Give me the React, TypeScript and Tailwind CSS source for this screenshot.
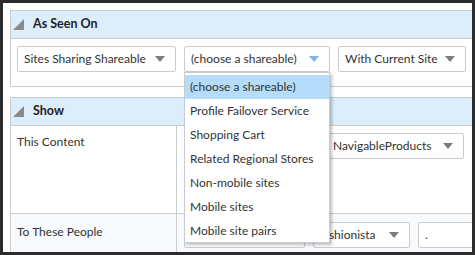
const Arrow = ({ color = "#7d7d7d" }: { color?: string }) => (
  <svg width="10" height="6" viewBox="0 0 10 6" className="shrink-0">
    <polygon points="0,0 10,0 5,6" fill={color} />
  </svg>
);

const Dropdown = ({
  label,
  width,
  arrowColor,
  textPad = "pl-[6px]",
}: {
  label: string;
  width: string;
  arrowColor?: string;
  textPad?: string;
}) => (
  <div
    className={`${width} ${textPad} h-[26px] shrink-0 border border-[#c8ccd0] rounded-[2px] bg-white flex items-center justify-between pr-[10px]`}
  >
    <span className="whitespace-nowrap">{label}</span>
    <Arrow color={arrowColor} />
  </div>
);

const Header = ({ title }: { title: string }) => (
  <div className="h-[28px] bg-[#dcedfc] border-b border-[#c9cdd2] flex items-center pl-[2px] gap-[9px]">
    <svg width="11" height="11" viewBox="0 0 11 11">
      <polygon points="11,0 11,11 0,11" fill="#8a8a8a" />
    </svg>
    <span className="font-bold text-[12.5px] text-[#1f1f1f]">{title}</span>
  </div>
);

const menuItems = [
  "(choose a shareable)",
  "Profile Failover Service",
  "Shopping Cart",
  "Related Regional Stores",
  "Non-mobile sites",
  "Mobile sites",
  "Mobile site pairs",
];

const App = () => {
  return (
    <div
      className="w-[475px] h-[255px] bg-[#2b2b2b] p-[3px] text-[12px] text-[#333]"
      style={{ fontFamily: "Lato, 'Open Sans', sans-serif" }}
    >
      <div className="relative h-full bg-white overflow-hidden pl-[7px] pt-[7px]">
        <div className="w-[475px]">
          {/* As Seen On */}
          <div className="border border-[#c9cdd2]">
            <Header title="As Seen On" />
            <div className="h-[47px] pt-[7px] pl-[6px] flex gap-[8px]">
              <Dropdown label="Sites Sharing Shareable" width="w-[159px]" />
              <Dropdown
                label="(choose a shareable)"
                width="w-[146px]"
                arrowColor="#7fb3e3"
              />
              <Dropdown label="With Current Site" width="w-[128px]" />
            </div>
          </div>

          {/* Show */}
          <div className="mt-[10px] border border-[#c9cdd2]">
            <Header title="Show" />
            <div className="flex h-[88px] border-b border-[#c9cdd2]">
              <div className="w-[166px] shrink-0 border-r border-[#c9cdd2] pl-[6px] pt-[7px]">
                This Content
              </div>
              <div className="pt-[7px] pl-[149px]">
                <Dropdown label="NavigableProducts" width="w-[138px]" />
              </div>
            </div>
            <div className="flex h-[60px] bg-[#f8fafd]">
              <div className="w-[166px] shrink-0 border-r border-[#c9cdd2] pl-[6px] pt-[9px]">
                To These People
              </div>
              <div className="pt-[8px] pl-[7px] flex gap-[8px]">
                <Dropdown label="" width="w-[121px]" />
                <Dropdown
                  label="Fashionista"
                  width="w-[97px]"
                  textPad="pl-[3px]"
                />
                <div className="w-[80px] h-[26px] shrink-0 border border-[#c8ccd0] rounded-[2px] bg-white pl-[6px] flex items-center">
                  .
                </div>
              </div>
            </div>
          </div>
        </div>

        {/* open menu */}
        <div className="absolute left-[181px] top-[69px] w-[146px] h-[171px] bg-white border border-[#c8ccd0] shadow-[2px_2px_3px_rgba(0,0,0,0.25)] pt-[2px]">
          {menuItems.map((item, i) => (
            <div
              key={item}
              className={`h-[24px] flex items-center pl-[5px] whitespace-nowrap ${
                i === 0 ? "bg-[#b5dcfb]" : ""
              }`}
            >
              {item}
            </div>
          ))}
        </div>
      </div>
    </div>
  );
};

export default App;
